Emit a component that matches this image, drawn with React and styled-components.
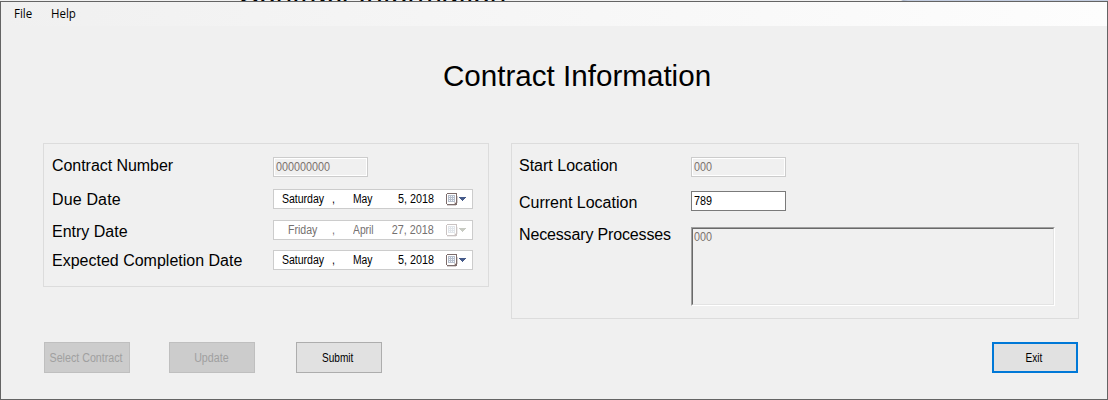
import React from 'react';
import styled, { createGlobalStyle } from 'styled-components';

const Global = createGlobalStyle`
  * { box-sizing: border-box; }
  body {
    margin: 0;
    background: #f0f0f0;
    font-family: "Liberation Sans", Arial, sans-serif;
    color: #000;
  }
`;

const Screen = styled.div`
  width: 1108px;
  height: 400px;
  display: flex;
  flex-direction: column;
  overflow: hidden;
`;

const Behind = styled.div`
  height: 1px;
  flex: none;
  display: flex;
  align-items: flex-end;
  overflow: hidden;
  padding-left: 238px;
  background: linear-gradient(90deg, #f0f0f0 901px, #a9b4c8 903px, #c3cde0 908px);
  font-size: 29.6px;
  line-height: 34px;
  white-space: nowrap;
`;

const BehindTitle = styled.span`
  margin-bottom: -10px;
`;

const Window = styled.main`
  flex: 1;
  border: 1px solid #646464;
  background: #f0f0f0;
  display: flex;
  flex-direction: column;
`;

const MenuBar = styled.nav`
  height: 24px;
  flex: none;
  display: flex;
  gap: 19px;
  padding-left: 13px;
  background: linear-gradient(90deg, #f0f0f0, #fdfdfd);
  font: 12px/24px "Open Sans", "Noto Sans", sans-serif;
`;

const MenuItem = styled.span`
  width: ${(p) => p.$width}px;
  white-space: nowrap;
  transform: scaleX(${(p) => p.$scale});
  transform-origin: left;
`;

const Title = styled.h1`
  margin: 33px 0 0 442px;
  height: 34px;
  font-size: 29.6px;
  line-height: 34px;
  font-weight: 400;
  white-space: nowrap;
`;

const Panels = styled.div`
  display: flex;
  align-items: flex-start;
  gap: 22px;
  margin: 50px 0 0 42px;
`;

const Panel = styled.section`
  width: ${(p) => p.$width}px;
  height: ${(p) => p.$height}px;
  border: 1px solid #dcdcdc;
  padding: 13px 0 0 7px;
`;

const Row = styled.div`
  display: flex;
  align-items: flex-start;
  margin-bottom: ${(p) => p.$gap || 0}px;
`;

const Label = styled.label`
  width: ${(p) => p.$width}px;
  height: 18px;
  margin: ${(p) => p.$drop}px 0 ${(p) => -p.$drop}px;
  padding-left: ${(p) => p.$indent || 0}px;
  flex: none;
  font-size: 16px;
  line-height: 18px;
  letter-spacing: ${(p) => p.$track || 0}px;
  white-space: nowrap;
`;

const Small = styled.span`
  display: inline-block;
  font-size: 12px;
  line-height: 14px;
  white-space: pre;
  transform: scaleX(${(p) => p.$scale || 0.89});
  transform-origin: ${(p) => p.$origin || 'left'};
`;

const TextBox = styled.div`
  width: 95px;
  height: 20px;
  display: flex;
  padding: 2px 0 0 2px;
  border: 1px solid ${(p) => (p.$disabled ? '#cccccc' : '#7a7a7a')};
  background: ${(p) => (p.$disabled ? '#f0f0f0' : '#fff')};
  box-shadow: inset 0 0 0 1px #fff;
  color: ${(p) => (p.$disabled ? '#7b706d' : '#000')};
`;

const TextArea = styled.div`
  width: 364px;
  height: 79px;
  border: 1px solid;
  border-color: #a0a0a0 #fff #fff #a0a0a0;
`;

const TextAreaInner = styled.div`
  height: 100%;
  display: flex;
  align-items: flex-start;
  border: 1px solid;
  border-color: #696969 #e3e3e3 #e3e3e3 #696969;
  padding: 1px 0 0 1px;
  color: #7b706d;
`;

const DateBox = styled.div`
  width: 200px;
  height: 20px;
  display: flex;
  padding-top: 2px;
  border: 1px solid #cccccc;
  background: #fff;
  color: ${(p) => (p.$disabled ? '#74706f' : '#000')};
`;

const DatePart = styled.div`
  width: ${(p) => p.$width}px;
  flex: none;
  display: flex;
  justify-content: ${(p) => p.$align};
`;

const DateIcon = styled.svg`
  margin: 1px 0 0 12px;
  flex: none;
  opacity: ${(p) => (p.$disabled ? 0.4 : 1)};
`;

const Buttons = styled.div`
  display: flex;
  margin: 23px 29px 0 43px;
`;

const Button = styled.button`
  width: 86px;
  height: 31px;
  margin: 0 ${(p) => p.$after || 0}px 0 0;
  margin-left: ${(p) => (p.$primary ? 'auto' : 0)};
  padding: 0 2px 0 0;
  display: flex;
  align-items: center;
  justify-content: center;
  font-family: inherit;
  border: ${(p) => (p.$primary ? '2px solid #0078d7' : '1px solid #adadad')};
  background: #e1e1e1;
  color: #000;
  &:disabled {
    border-color: #bfbfbf;
    background: #cccccc;
    color: #a0a0a0;
  }
`;

function CalendarGlyph({ disabled }) {
  return (
    <DateIcon $disabled={disabled} width="22" height="14" viewBox="0 0 22 14" shapeRendering="crispEdges">
      <path d="M1 12h9v1H1zM11 3h1v7h-1z" fill="#d5d0d0" />
      <path d="M1 0h9l1 1v11H1l-1-1V1z" fill="#7c6c6b" />
      <path d="M1 1h9v8H8v2H1z" fill="#fff" />
      <path d="M2 2h7v7H2z" fill="#b6bfcd" />
      <path d="M3 3h1v1H3zM5 3h1v1H5zM7 3h1v1H7zM3 5h1v1H3zM5 5h1v1H5zM7 5h1v1H7zM3 7h1v1H3zM5 7h1v1H5zM7 7h1v1H7z" fill="#f4f8fc" />
      <path d="M8 9h2v1H9v1H8z" fill="#d6cfcd" />
      <path d="M13 4h7v1h-1v1h-1v1h-1v1h-1V7h-1V6h-1V5h-1z" fill={disabled ? '#77806a' : '#465b8a'} />
    </DateIcon>
  );
}

function DatePicker({ weekday, month, day, disabled }) {
  return (
    <DateBox $disabled={disabled}>
      <DatePart $width={58} $align="center"><Small $origin="center" $scale={0.88}>{weekday}</Small></DatePart>
      <DatePart $width={21} $align="flex-start"><Small>,</Small></DatePart>
      <DatePart $width={30} $align="flex-start"><Small $scale={0.86}>{month}</Small></DatePart>
      <DatePart $width={51} $align="flex-end"><Small $origin="right" $scale={0.9}>{day}</Small></DatePart>
      <CalendarGlyph disabled={disabled} />
    </DateBox>
  );
}

export default function App() {
  return (
    <>
      <Global />
      <Screen>
        <Behind aria-hidden="true"><BehindTitle>Contract Information</BehindTitle></Behind>
        <Window>
          <MenuBar>
            <MenuItem $width={18} $scale={0.96}>File</MenuItem>
            <MenuItem $width={26} $scale={0.96}>Help</MenuItem>
          </MenuBar>
          <Title>Contract Information</Title>
          <Panels>
            <Panel $width={446} $height={144}>
              <Row $gap={12}>
                <Label $width={222} $drop={0} $indent={1} $track={-0.05}>Contract Number</Label>
                <TextBox $disabled><Small $scale={0.9}>000000000</Small></TextBox>
              </Row>
              <Row $gap={11}>
                <Label $width={222} $drop={2} $indent={1} $track={0.15}>Due Date</Label>
                <DatePicker weekday="Saturday" month="May" day="5, 2018" />
              </Row>
              <Row $gap={10}>
                <Label $width={222} $drop={3} $indent={1}>Entry Date</Label>
                <DatePicker weekday="Friday" month="April" day="27, 2018" disabled />
              </Row>
              <Row>
                <Label $width={222} $drop={2} $indent={1}>Expected Completion Date</Label>
                <DatePicker weekday="Saturday" month="May" day="5, 2018" />
              </Row>
            </Panel>
            <Panel $width={568} $height={176}>
              <Row $gap={14}>
                <Label $width={172} $drop={0}>Start Location</Label>
                <TextBox $disabled><Small $scale={0.9}>000</Small></TextBox>
              </Row>
              <Row $gap={16}>
                <Label $width={172} $drop={3}>Current Location</Label>
                <TextBox><Small $scale={0.9}>789</Small></TextBox>
              </Row>
              <Row>
                <Label $width={172} $drop={-1} $track={-0.15}>Necessary Processes</Label>
                <TextArea><TextAreaInner><Small $scale={0.9}>000</Small></TextAreaInner></TextArea>
              </Row>
            </Panel>
          </Panels>
          <Buttons>
            <Button disabled $after={39}><Small $origin="center">Select Contract</Small></Button>
            <Button disabled $after={41}><Small $origin="center">Update</Small></Button>
            <Button><Small $origin="center" $scale={0.84}>Submit</Small></Button>
            <Button $primary><Small $origin="center" $scale={0.84}>Exit</Small></Button>
          </Buttons>
        </Window>
      </Screen>
    </>
  );
}
